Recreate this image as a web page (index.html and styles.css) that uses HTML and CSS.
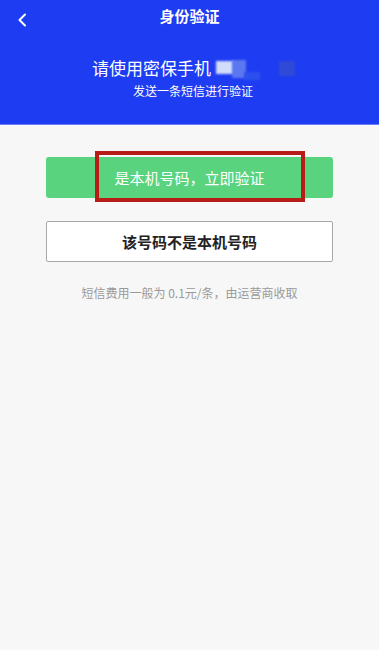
FILE: index.html
```html
<!DOCTYPE html>
<html lang="zh">
<head>
    <meta charset="UTF-8">
    <meta name="viewport" content="width=device-width, initial-scale=1.0">
    <title>身份验证</title>
    <link rel="stylesheet" href="styles.css">
</head>
<body>

    <div class="header">
        <div class="navbar">
            <span class="back">
                <svg width="10" height="14" viewBox="0 0 10 14"><path d="M8 1.5 L2.5 7 L8 12.5" fill="none" stroke="#fff" stroke-width="2" stroke-linecap="round" stroke-linejoin="round"/></svg>
            </span>
            <span class="title">身份验证</span>
        </div>
        <div class="phone-line">
            请使用密保手机<span class="mask">
                <i class="m1"></i><i class="m2"></i><i class="m3"></i><i class="m4"></i>
            </span>
        </div>
        <div class="sub-line">发送一条短信进行验证</div>
    </div>

    <div class="actions">
        <div class="btn-wrap">
            <button class="btn btn-green">是本机号码，立即验证</button>
            <div class="highlight"></div>
        </div>
        <button class="btn btn-white">该号码不是本机号码</button>
        <p class="note">短信费用一般为 0.1元/条，由运营商收取</p>
    </div>

</body>
</html>
```

FILE: styles.css
```css
* {
    box-sizing: border-box;
}

body {
    margin: 0;
    background-color: #f7f7f7;
    font-family: "Noto Sans CJK SC", "Noto Sans", sans-serif;
}

.header {
    background-color: #1e3cf2;
    color: #fff;
    height: 125px;
    border-bottom: 1px solid #6b7ff0;
}

.navbar {
    position: relative;
    height: 30px;
    display: flex;
    justify-content: center;
    align-items: center;
}

.back {
    position: absolute;
    left: 17px;
    top: 8px;
}

.title {
    font-size: 15px;
    font-weight: bold;
}

.phone-line {
    margin-top: 26px;
    padding-left: 92px;
    font-size: 17px;
    line-height: 24px;
    display: flex;
    align-items: center;
}

.mask {
    position: relative;
    display: inline-block;
    width: 90px;
    height: 24px;
    margin-left: 3px;
}

.mask i {
    position: absolute;
    display: block;
    filter: blur(1px);
}

.mask .m1 { left: 2px; top: 5px; width: 18px; height: 13px; background: #d2dcfb; }
.mask .m2 { left: 18px; top: 4px; width: 14px; height: 18px; background: #5c78f0; }
.mask .m3 { left: 30px; top: 16px; width: 16px; height: 8px; background: #2c50ee; }
.mask .m4 { left: 65px; top: 5px; width: 16px; height: 15px; background: #2f4ad6; }

.sub-line {
    padding-left: 133px;
    font-size: 12px;
    line-height: 16px;
    margin-top: 3px;
}

.actions {
    padding: 32px 46px 0;
}

.btn-wrap {
    position: relative;
}

.btn {
    display: block;
    width: 100%;
    height: 41px;
    border-radius: 3px;
    font-family: inherit;
    font-size: 15px;
    cursor: pointer;
}

.btn-green {
    background-color: #5ad37e;
    border: none;
    color: #fff;
}

.btn-white {
    margin-top: 23px;
    background-color: #fff;
    border: 1px solid #a8a8a8;
    color: #222;
    font-weight: bold;
    border-radius: 2px;
}

.highlight {
    position: absolute;
    left: 49px;
    top: -6px;
    width: 210px;
    height: 51px;
    border: 4px solid #b81c16;
}

.note {
    margin: 22px 0 0;
    text-align: center;
    font-size: 12px;
    color: #9a9a9a;
}
```
